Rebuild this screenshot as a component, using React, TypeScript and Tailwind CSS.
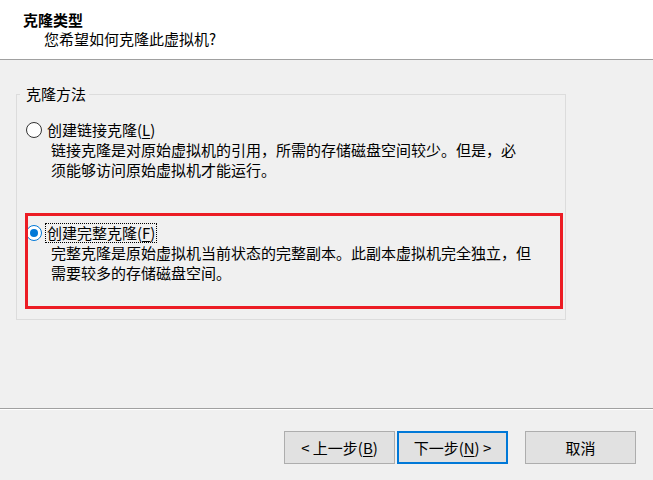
import React from "react";

function Radio({ checked }: { checked?: boolean }) {
  return (
    <span
      className={
        "flex h-[16px] w-[16px] shrink-0 items-center justify-center rounded-full border bg-white " +
        (checked ? "border-[#0078d7]" : "border-[#333333]")
      }
    >
      {checked && <span className="h-[8px] w-[8px] rounded-full bg-[#0078d7]" />}
    </span>
  );
}

function WizardButton({
  children,
  primary,
}: {
  children: React.ReactNode;
  primary?: boolean;
}) {
  return (
    <button
      className={
        "flex h-[33px] w-[111px] items-center justify-center bg-[#e1e1e1] text-[15px] leading-[20px] text-black " +
        (primary ? "border-2 border-[#0078d7]" : "border border-[#adadad]")
      }
    >
      {children}
    </button>
  );
}

export default function App() {
  return (
    <div className="relative flex h-[480px] w-[653px] flex-col overflow-hidden bg-[#f0f0f0] font-['Noto_Sans_CJK_SC','Noto_Sans',sans-serif] text-[15px] leading-[20px] text-black">
      {/* header */}
      <div className="h-[60px] shrink-0 border-b border-[#a0a0a0] bg-white pt-[10px]">
        <div className="pl-[23px] font-bold leading-[19px]">克隆类型</div>
        <div className="pl-[44px] leading-[19px]">您希望如何克隆此虚拟机?</div>
      </div>

      {/* body */}
      <div className="h-[348px] shrink-0 pt-[24px]">
        <fieldset className="ml-[16px] h-[236px] w-[550px] border border-[#dcdcdc] p-0">
          <legend className="ml-[3px] pl-[6px] pr-[3px] leading-[20px]">克隆方法</legend>

          <div className="mt-[16px] pl-[9px]">
            <div className="flex items-center">
              <Radio />
              <span className="ml-[3px] border border-transparent px-[1px] leading-[18px]">
                创建链接克隆(<span className="underline underline-offset-2">L</span>)
              </span>
            </div>
            <div className="pl-[25px]">
              <p>链接克隆是对原始虚拟机的引用，所需的存储磁盘空间较少。但是，必</p>
              <p>须能够访问原始虚拟机才能运行。</p>
            </div>

            <div className="mt-[43px] flex items-center">
              <Radio checked />
              <span className="ml-[3px] border border-dotted border-black px-[1px] leading-[18px]">
                创建完整克隆(<span className="underline underline-offset-2">F</span>)
              </span>
            </div>
            <div className="pl-[25px]">
              <p>完整克隆是原始虚拟机当前状态的完整副本。此副本虚拟机完全独立，但</p>
              <p>需要较多的存储磁盘空间。</p>
            </div>
          </div>
        </fieldset>
      </div>

      {/* footer */}
      <div className="flex-1 border-t border-[#a0a0a0]">
        <div className="border-t border-white" />
        <div className="flex justify-end pr-[17px] pt-[21px]">
          <WizardButton>
            &lt; 上一步(<span className="underline underline-offset-2">B</span>)
          </WizardButton>
          <div className="ml-[2px]">
            <WizardButton primary>
              下一步(<span className="underline underline-offset-2">N</span>) &gt;
            </WizardButton>
          </div>
          <div className="ml-[17px]">
            <WizardButton>取消</WizardButton>
          </div>
        </div>
      </div>

      {/* red highlight annotation */}
      <div className="pointer-events-none absolute left-[25px] top-[213px] h-[96px] w-[538px] border-[3px] border-[#ec1c24]" />
    </div>
  );
}
